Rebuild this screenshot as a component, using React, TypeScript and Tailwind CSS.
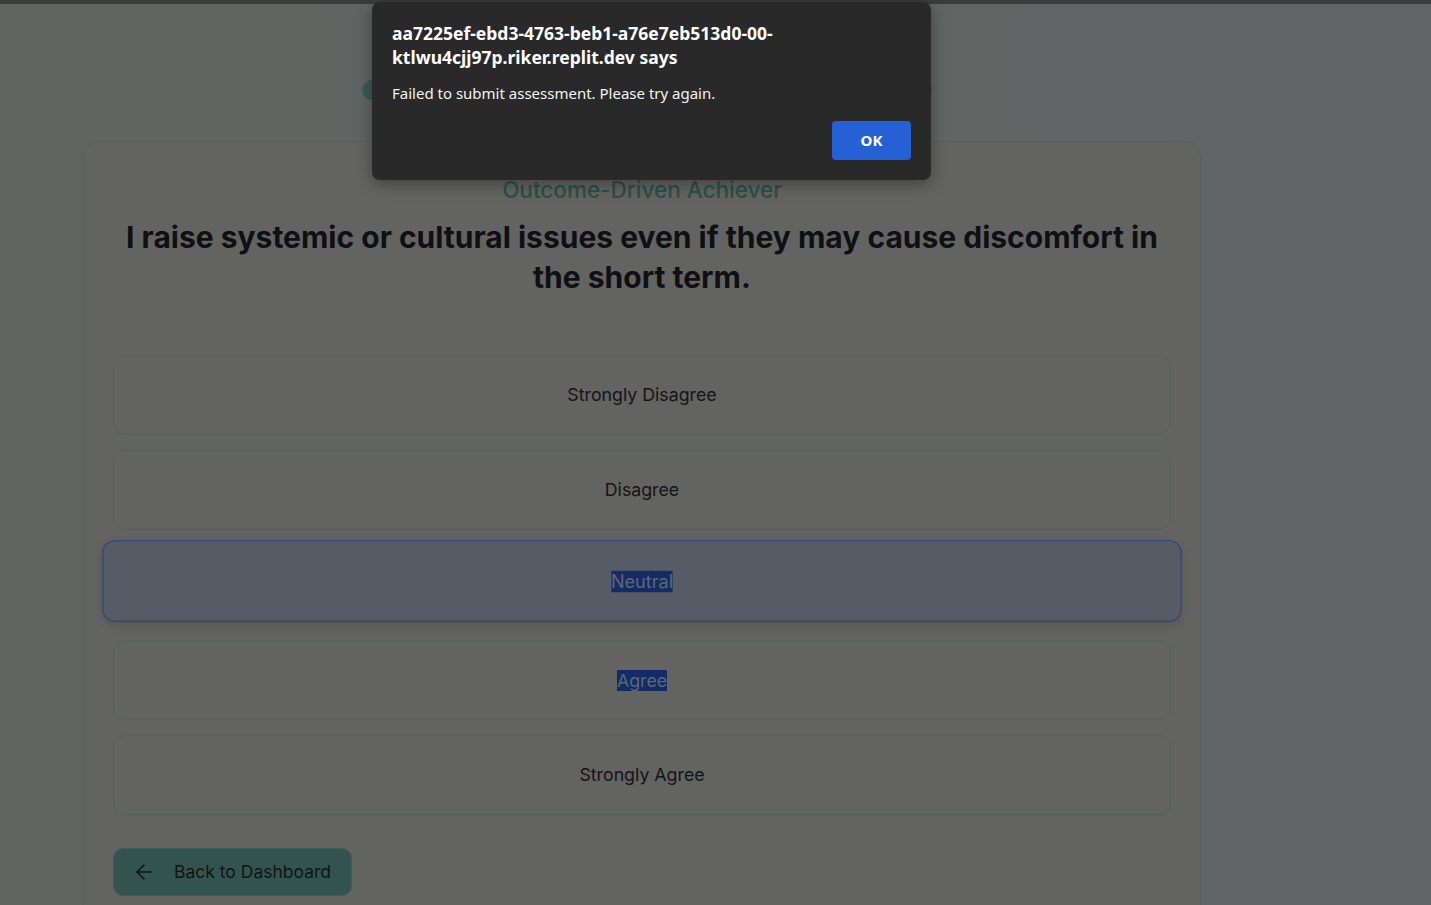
import { ArrowLeft } from "lucide-react"

const options = ["Strongly Disagree", "Disagree", "Neutral", "Agree", "Strongly Agree"]

function AlertDialog() {
  return (
    <div className="absolute left-[372px] top-[2px] z-50 w-[559px] rounded-lg bg-[#292929] px-5 pt-[19px] pb-5 shadow-[0_4px_16px_rgba(0,0,0,0.35)] font-['Noto_Sans','Open_Sans',sans-serif]">
      <div className="text-[17.5px] font-bold leading-6 text-white">
        aa7225ef-ebd3-4763-beb1-a76e7eb513d0-00-
        <br />
        ktlwu4cjj97p.riker.replit.dev says
      </div>
      <div className="mt-3 text-[15px] leading-6 text-[#f2f2f2]">
        Failed to submit assessment. Please try again.
      </div>
      <div className="mt-4 flex justify-end">
        <button className="h-[39px] w-[79px] rounded bg-[#2560d4] text-[15px] font-bold text-white">OK</button>
      </div>
    </div>
  )
}

export default function App() {
  return (
    <div className="relative h-[905px] w-[1431px] overflow-hidden bg-gradient-to-r from-[#5f6461] via-[#606463] to-[#616565] font-['Inter',sans-serif]">
      <div className="h-[4px] w-full bg-[#3c3c3c]" />

      {/* progress */}
      <div className="ml-[362px] mt-[76px] h-[20px] w-[570px] rounded-full bg-[#3a5b55]" />

      {/* question card */}
      <div className="ml-[83px] mt-[41px] h-[800px] w-[1118px] rounded-2xl border border-[#52625f] bg-[#636362] px-[29px] pt-[34px]">
        <div className="text-center text-[22.5px] font-medium leading-7 text-[#29504b]">Outcome-Driven Achiever</div>
        <h1 className="mx-auto mt-[13px] w-[1058px] text-center text-[30px] font-bold leading-[40px] text-[#0e1013]">
          I raise systemic or cultural issues even if they may cause discomfort in
          <br />
          the short term.
        </h1>

        <div className="mt-[58px] flex flex-col gap-[15px]">
          {options.map((o) => {
            const selected = o === "Neutral"
            const highlighted = o === "Neutral" || o === "Agree"
            return (
              <div
                key={o}
                className={
                  selected
                    ? "flex h-[80px] -translate-y-[4px] scale-[1.02] items-center justify-center rounded-xl border border-[#25427f] bg-[#565c66] shadow-[0_4px_8px_rgba(0,0,0,0.12)]"
                    : "flex h-[80px] items-center justify-center rounded-xl border border-[#52625f] bg-[#636362]"
                }
              >
                <span
                  className={
                    highlighted
                      ? "bg-[#142c63] text-[17.75px] leading-[21px] text-[#5c6777]"
                      : "text-[17.75px] text-[#141518]"
                  }
                >
                  {o}
                </span>
              </div>
            )
          })}
        </div>

        <button className="mt-[33px] flex h-[48px] w-[239px] items-center gap-[18px] rounded-[10px] border border-[#3e5e59] bg-[#33534e] pl-[18px] text-[17.5px] text-[#111416]">
          <ArrowLeft className="h-6 w-6" strokeWidth={1.6} />
          Back to Dashboard
        </button>
      </div>

      <AlertDialog />
    </div>
  )
}
